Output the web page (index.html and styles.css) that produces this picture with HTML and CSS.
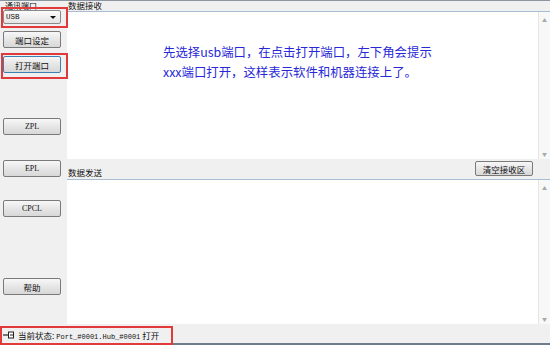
FILE: index.html
```html
<!DOCTYPE html>
<html lang="zh">
<head>
  <meta charset="UTF-8">
  <title>串口工具</title>
  <link rel="stylesheet" href="styles.css">
</head>
<body>
  <div class="app">
    <div class="main">
      <!-- 左侧操作区 -->
      <div class="side">
        <div class="side-label">通讯端口</div>
        <div class="combo"><span>USB</span><span class="caret"></span></div>
        <button class="btn btn-set">端口设定</button>
        <button class="btn btn-open">打开端口</button>
        <button class="btn btn-zpl">ZPL</button>
        <button class="btn btn-epl">EPL</button>
        <button class="btn btn-cpcl">CPCL</button>
        <button class="btn btn-help">帮助</button>
      </div>

      <!-- 数据区 -->
      <div class="content">
        <div class="area-label">数据接收</div>
        <div class="box recv">
          <div class="box-text">
            <p class="hint">先选择usb端口，在点击打开端口，左下角会提示</p>
            <p class="hint">xxx端口打开，这样表示软件和机器连接上了。</p>
          </div>
          <div class="scroll"><span>▲</span><span>▼</span></div>
        </div>
        <div class="send-bar">
          <div class="area-label">数据发送</div>
          <button class="btn btn-clear">清空接收区</button>
        </div>
        <div class="box send">
          <div class="box-text"></div>
          <div class="scroll"><span>▲</span><span>▼</span></div>
        </div>
      </div>
    </div>

    <div class="status">
      <svg class="pin" width="12" height="8" viewBox="0 0 12 8">
        <line x1="0" y1="4" x2="5" y2="4" stroke="#222" stroke-width="1.2"/>
        <rect x="5.5" y="1" width="5" height="6" fill="#fff" stroke="#222" stroke-width="1"/>
        <line x1="7" y1="4" x2="10" y2="4" stroke="#222" stroke-width="1"/>
      </svg>
      <span class="status-text">当前状态: <span class="mono">Port_#0001.Hub_#0001</span> 打开</span>
    </div>

    <!-- 红框标注 -->
    <div class="mark mark-combo"></div>
    <div class="mark mark-open"></div>
    <div class="mark mark-status"></div>
  </div>
</body>
</html>
```

FILE: styles.css
```css
* {
  margin: 0;
  padding: 0;
  box-sizing: border-box;
}

body {
  width: 550px;
  height: 345px;
  overflow: hidden;
  background: #f0f0f0;
  font-family: "Noto Sans CJK SC", "Liberation Sans", sans-serif;
  font-size: 8.5px;
  color: #111;
}

.app {
  position: relative;
  height: 345px;
  display: flex;
  flex-direction: column;
  border-top: 1px solid #8c96a0;
  border-bottom: 2px solid #6f7d8a;
}

.main {
  display: flex;
  height: 323px;
}

/* Left panel */
.side {
  width: 67px;
  display: flex;
  flex-direction: column;
  padding-left: 3px;
}

.side-label {
  height: 9px;
  line-height: 9px;
  font-size: 8px;
  padding-left: 2px;
}

.combo {
  width: 58px;
  height: 14px;
  border: 1px solid #8a8a8a;
  border-radius: 2px;
  background: linear-gradient(#fbfbfb, #e4e4e4);
  display: flex;
  align-items: center;
  justify-content: space-between;
  padding: 0 4px 0 2px;
  font-family: "Liberation Mono", monospace;
  font-size: 7.5px;
}

.caret {
  width: 0;
  height: 0;
  border-left: 3px solid transparent;
  border-right: 3px solid transparent;
  border-top: 3px solid #111;
}

.btn {
  width: 58px;
  height: 17px;
  border: 1px solid #7a7a7a;
  border-radius: 2px;
  background: linear-gradient(#f7f7f7, #e6e6e6 50%, #d8d8d8);
  font-family: "Noto Sans CJK SC", "Liberation Serif", serif;
  font-size: 8.5px;
  color: #111;
  display: flex;
  align-items: center;
  justify-content: center;
}

.btn-set { margin-top: 7px; }
.btn-open { margin-top: 8px; border-color: #3c7fb1; }
.btn-zpl { margin-top: 45px; }
.btn-epl { margin-top: 25px; }
.btn-cpcl { margin-top: 23px; }
.btn-help { margin-top: 61px; }

.btn-zpl,
.btn-epl,
.btn-cpcl {
  font-family: "Liberation Serif", serif;
  font-size: 8px;
}

/* Data areas */
.content {
  flex: 1;
  display: flex;
  flex-direction: column;
}

.area-label {
  height: 10px;
  line-height: 9px;
  padding-left: 1px;
}

.box {
  display: flex;
  background: #fff;
  border-top: 1px solid #a9bdd0;
}

.recv { height: 148px; }
.send { height: 145px; }

.box-text {
  flex: 1;
}

.recv .box-text {
  padding: 30px 0 0 96px;
}

.hint {
  font-size: 12.4px;
  line-height: 20px;
  color: #2828d8;
  white-space: nowrap;
}

.scroll {
  width: 12px;
  border-left: 1px solid #e6e6e6;
  background: #f8f8f8;
  display: flex;
  flex-direction: column;
  justify-content: space-between;
  align-items: center;
  padding: 4px 0 2px;
  font-size: 5px;
  color: #a8a8a8;
}

.send-bar {
  height: 21px;
  display: flex;
  justify-content: space-between;
  align-items: flex-end;
  padding-right: 17px;
}

.send-bar .area-label {
  height: 12px;
  line-height: 11px;
}

.btn-clear {
  width: 58px;
  height: 15px;
  margin-bottom: 3px;
}

/* Status bar */
.status {
  flex: 1;
  display: flex;
  align-items: center;
  padding: 2px 0 0 3px;
  gap: 3px;
}

.status-text {
  font-size: 8.5px;
}

.mono {
  font-family: "Liberation Mono", monospace;
  font-size: 7px;
}

/* Red annotation boxes */
.mark {
  position: absolute;
  border: 2px solid #e23a3a;
}

.mark-combo {
  left: 1px;
  top: 6px;
  width: 67px;
  height: 21px;
}

.mark-open {
  left: 1px;
  top: 52px;
  width: 67px;
  height: 26px;
}

.mark-status {
  left: 0;
  top: 325px;
  width: 173px;
  height: 19px;
}
```
